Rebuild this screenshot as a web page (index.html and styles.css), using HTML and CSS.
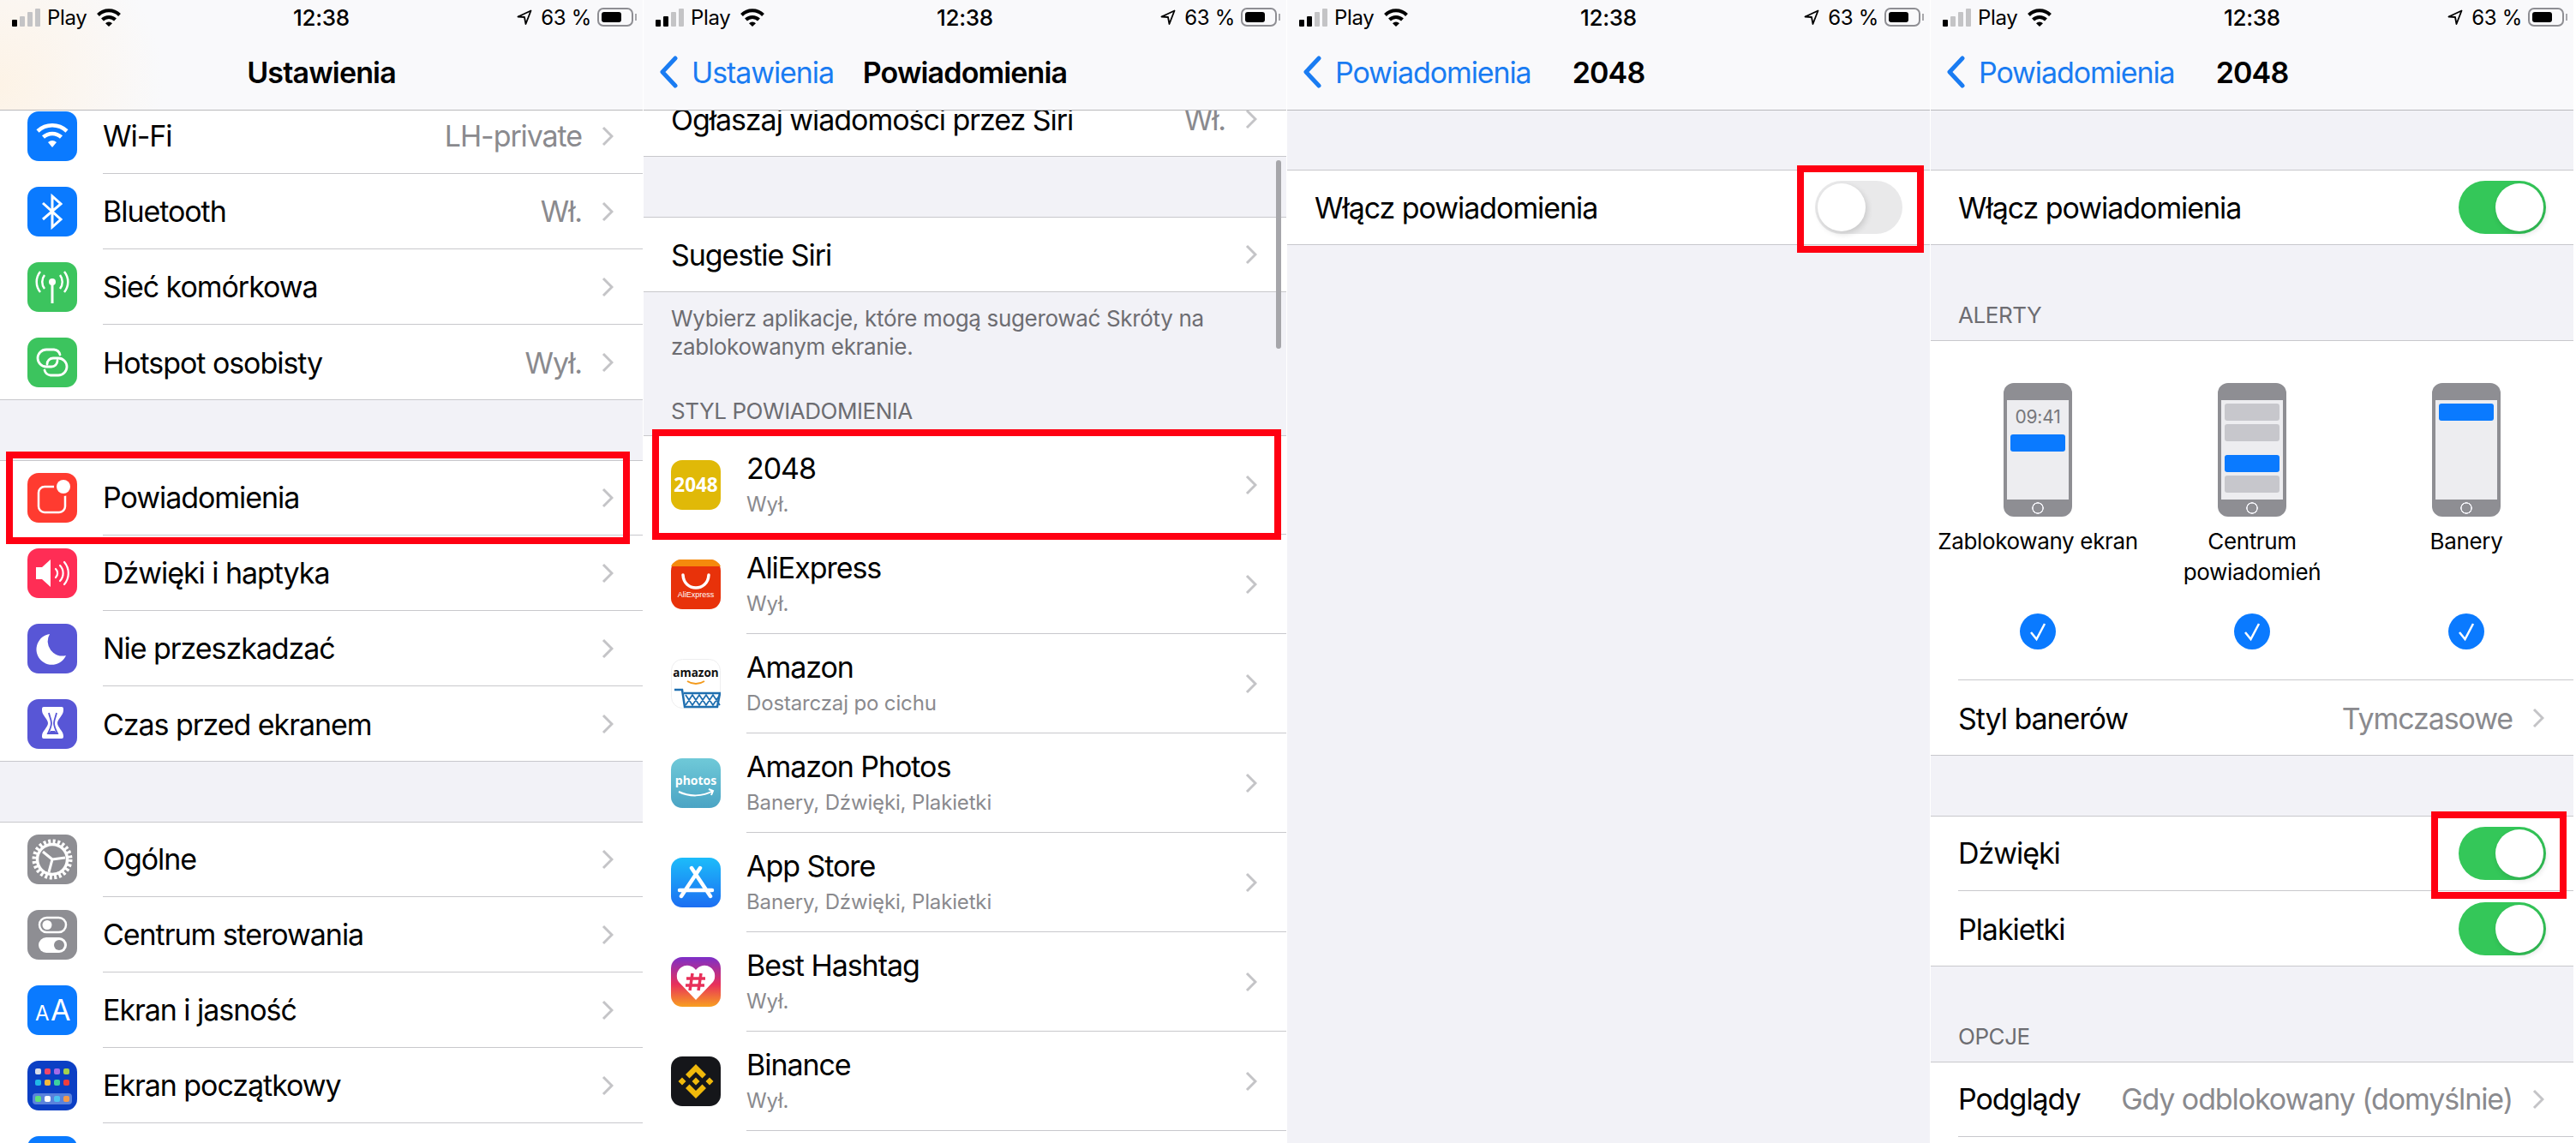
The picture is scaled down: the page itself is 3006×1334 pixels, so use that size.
FILE: index.html
```html
<!DOCTYPE html>
<html lang="pl">
<head>
  <meta charset="UTF-8">
  <meta name="viewport" content="width=device-width, initial-scale=1.0">
  <title>Powiadomienia</title>
  <link rel="stylesheet" href="styles.css">
</head>
<body>
  <svg class="sprite">
    <symbol id="chev" viewBox="0 0 14 24"><path d="M2 2l10 10L2 22" fill="none" stroke="#c4c4c7" stroke-width="3"/></symbol>
    <symbol id="back" viewBox="0 0 24 38"><path d="M20 3L5 19l15 16" fill="none" stroke="#1a7cf2" stroke-width="5" stroke-linecap="round" stroke-linejoin="round"/></symbol>
    <symbol id="wifi" viewBox="0 0 30 22"><path d="M2.500 8.500a17.700 17.700 0 0 1 25 0M7.500 14a10.600 10.600 0 0 1 15 0" fill="none" stroke="#000" stroke-width="4"/><path d="M11 18.300a5.600 5.600 0 0 1 8 0L15 22z"/></symbol>
    <symbol id="arrow" viewBox="0 0 18 18"><path d="M16.500 1.500L1.500 8.500l7.500.5 1.500 8z" fill="none" stroke="#000" stroke-width="1.800" stroke-linejoin="round"/></symbol>
    <symbol id="check" viewBox="0 0 42 42"><circle cx="21" cy="21" r="21" fill="#0a7aff"/><path d="M13 22l6.500 8L29 12" fill="none" stroke="#fff" stroke-width="2.500"/></symbol>
  </svg>

  <div class="screens">

    <section class="panel">
      <header class="top top-warm">
        <div class="status">
          <div class="status-left"><span class="signal"><i class="on"></i><i></i><i></i><i></i></span><span>Play</span><svg class="wifi"><use href="#wifi"/></svg></div>
          <div class="time">12:38</div>
          <div class="status-right"><svg class="arrow"><use href="#arrow"/></svg><span>63 %</span><span class="battery"><i></i></span></div>
        </div>
        <div class="nav"><div></div><div class="nav-title">Ustawienia</div><div></div></div>
      </header>
      <div class="scroll scroll-settings">
        <div class="group">
          <div class="row">
            <svg class="icon" viewBox="0 0 58 58"><rect width="58" height="58" rx="13" fill="#0a7aff"/><path d="M12 23a25 25 0 0 1 34 0M18.500 30a15.500 15.500 0 0 1 21 0" fill="none" stroke="#fff" stroke-width="4.500"/><path d="M24 36a8 8 0 0 1 10 0l-5 6z" fill="#fff"/></svg>
            <div class="row-body"><span class="label">Wi-Fi</span><span class="value">LH-private</span><svg class="chev"><use href="#chev"/></svg></div>
          </div>
          <div class="row">
            <svg class="icon" viewBox="0 0 58 58"><rect width="58" height="58" rx="13" fill="#0a7aff"/><path d="M18 19l21 19-10 9V11l10 9-21 18" fill="none" stroke="#fff" stroke-width="3"/></svg>
            <div class="row-body"><span class="label">Bluetooth</span><span class="value">Wł.</span><svg class="chev"><use href="#chev"/></svg></div>
          </div>
          <div class="row">
            <svg class="icon" viewBox="0 0 58 58"><rect width="58" height="58" rx="13" fill="#3cc45e"/><circle cx="29" cy="23" r="4" fill="#fff"/><path d="M29 26v22" stroke="#fff" stroke-width="3"/><path d="M20 15a13 13 0 0 0 0 16M38 15a13 13 0 0 1 0 16M15 11a19 19 0 0 0 0 24M43 11a19 19 0 0 1 0 24" fill="none" stroke="#fff" stroke-width="2.500"/></svg>
            <div class="row-body"><span class="label">Sieć komórkowa</span><svg class="chev"><use href="#chev"/></svg></div>
          </div>
          <div class="row">
            <svg class="icon" viewBox="0 0 58 58"><rect width="58" height="58" rx="13" fill="#3cc45e"/><path d="M38 20a8 8 0 0 0-7-6h-9a10 10 0 0 0 0 20h6a7 7 0 0 0 7-7M20 38a8 8 0 0 0 7 6h9a10 10 0 0 0 0-20h-6a7 7 0 0 0-7 7" fill="none" stroke="#fff" stroke-width="2.800" stroke-linecap="round"/></svg>
            <div class="row-body"><span class="label">Hotspot osobisty</span><span class="value">Wył.</span><svg class="chev"><use href="#chev"/></svg></div>
          </div>
        </div>

        <div class="group">
          <div class="row">
            <svg class="icon" viewBox="0 0 58 58"><rect width="58" height="58" rx="13" fill="#ff3b30"/><rect x="13" y="16" width="31" height="30" rx="7" fill="none" stroke="#fff" stroke-width="2.500"/><circle cx="42" cy="16" r="11" fill="#ff3b30"/><circle cx="42" cy="16" r="8" fill="#fff"/></svg>
            <div class="row-body"><span class="label">Powiadomienia</span><svg class="chev"><use href="#chev"/></svg></div>
          </div>
          <div class="row">
            <svg class="icon" viewBox="0 0 58 58"><rect width="58" height="58" rx="13" fill="#ff2d55"/><path d="M10 22h7l10-9v32l-10-9h-7z" fill="#fff"/><path d="M33 24a7 7 0 0 1 0 10M38 20a13 13 0 0 1 0 18M43 16a20 20 0 0 1 0 26" fill="none" stroke="#fff" stroke-width="2.200" stroke-linecap="round"/></svg>
            <div class="row-body"><span class="label">Dźwięki i haptyka</span><svg class="chev"><use href="#chev"/></svg></div>
          </div>
          <div class="row">
            <svg class="icon" viewBox="0 0 58 58"><rect width="58" height="58" rx="13" fill="#5856d6"/><path d="M26 12a18 18 0 1 0 19 25 17 17 0 0 1-19-25z" fill="#fff"/></svg>
            <div class="row-body"><span class="label">Nie przeszkadzać</span><svg class="chev"><use href="#chev"/></svg></div>
          </div>
          <div class="row">
            <svg class="icon" viewBox="0 0 58 58"><rect width="58" height="58" rx="13" fill="#5856d6"/><path d="M19 9h21a2 2 0 0 1 2 2v2c0 6-7 10-7 15s7 9 7 15v1a2 2 0 0 1-2 2H19a2 2 0 0 1-2-2v-1c0-6 7-10 7-15s-7-9-7-15v-2a2 2 0 0 1 2-2z" fill="#fff"/><path d="M25 16c1 5 3 8 3 12s-2 8-4 12h11c-2-4-4-8-4-12s2-7 3-12" fill="none" stroke="#5856d6" stroke-width="1.800"/><path d="M24 41h11l-3-4h-5z" fill="#5856d6"/></svg>
            <div class="row-body"><span class="label">Czas przed ekranem</span><svg class="chev"><use href="#chev"/></svg></div>
          </div>
        </div>

        <div class="group">
          <div class="row">
            <svg class="icon" viewBox="0 0 58 58"><rect width="58" height="58" rx="13" fill="#8e8e93"/><circle cx="29" cy="29" r="21" fill="none" stroke="#fff" stroke-width="5" stroke-dasharray="3 2.500"/><circle cx="29" cy="29" r="17.500" fill="none" stroke="#fff" stroke-width="3.500"/><path d="M29 29L18 20M29 29L44 27M29 29L25 44" stroke="#fff" stroke-width="3"/></svg>
            <div class="row-body"><span class="label">Ogólne</span><svg class="chev"><use href="#chev"/></svg></div>
          </div>
          <div class="row">
            <svg class="icon" viewBox="0 0 58 58"><rect width="58" height="58" rx="13" fill="#8e8e93"/><rect x="14" y="9" width="31" height="17" rx="8.500" fill="none" stroke="#fff" stroke-width="2.500"/><circle cx="23" cy="17.500" r="5.500" fill="#fff"/><rect x="13" y="32" width="33" height="18" rx="9" fill="#fff"/><circle cx="37" cy="41" r="6" fill="#8e8e93"/></svg>
            <div class="row-body"><span class="label">Centrum sterowania</span><svg class="chev"><use href="#chev"/></svg></div>
          </div>
          <div class="row">
            <svg class="icon" viewBox="0 0 58 58"><rect width="58" height="58" rx="13" fill="#0a7aff"/><text x="9" y="41" class="glyph-a-small">A</text><text x="27" y="41" class="glyph-a">A</text></svg>
            <div class="row-body"><span class="label">Ekran i jasność</span><svg class="chev"><use href="#chev"/></svg></div>
          </div>
          <div class="row">
            <svg class="icon" viewBox="0 0 58 58"><rect width="58" height="58" rx="13" fill="#0b3fc4"/><rect x="9" y="9" width="7" height="7" rx="2" fill="#d9dce8"/><rect x="20" y="9" width="7" height="7" rx="2" fill="#f0476a"/><rect x="31" y="9" width="7" height="7" rx="2" fill="#a56be8"/><rect x="42" y="9" width="7" height="7" rx="2" fill="#a3d04e"/><rect x="9" y="22" width="7" height="7" rx="2" fill="#22b8e8"/><rect x="20" y="22" width="7" height="7" rx="2" fill="#f5b83d"/><rect x="31" y="22" width="7" height="7" rx="2" fill="#3dd0a0"/><rect x="42" y="22" width="7" height="7" rx="2" fill="#ef3d3d"/><rect x="6" y="38" width="46" height="13" rx="4" fill="#5a82dc"/><rect x="9" y="41" width="7" height="7" rx="2" fill="#5fe07a"/><rect x="20" y="41" width="7" height="7" rx="2" fill="#fff"/><rect x="31" y="41" width="7" height="7" rx="2" fill="#4cc2f0"/><rect x="42" y="41" width="7" height="7" rx="2" fill="#f59a4a"/></svg>
            <div class="row-body"><span class="label">Ekran początkowy</span><svg class="chev"><use href="#chev"/></svg></div>
          </div>
          <div class="row">
            <svg class="icon" viewBox="0 0 58 58"><rect width="58" height="58" rx="13" fill="#0a7aff"/></svg>
            <div class="row-body"></div>
          </div>
        </div>
      </div>
      <div class="mark mark-settings"></div>
    </section>

    <section class="panel">
      <header class="top">
        <div class="status">
          <div class="status-left"><span class="signal"><i class="on"></i><i class="on"></i><i></i><i></i></span><span>Play</span><svg class="wifi"><use href="#wifi"/></svg></div>
          <div class="time">12:38</div>
          <div class="status-right"><svg class="arrow"><use href="#arrow"/></svg><span>63 %</span><span class="battery"><i></i></span></div>
        </div>
        <div class="nav">
          <div class="nav-back"><svg class="back"><use href="#back"/></svg><span>Ustawienia</span></div>
          <div class="nav-title">Powiadomienia</div>
          <div></div>
        </div>
      </header>
      <div class="scroll scroll-apps">
        <div class="group">
          <div class="row"><div class="row-body"><span class="label">Ogłaszaj wiadomości przez Siri</span><span class="value">Wł.</span><svg class="chev"><use href="#chev"/></svg></div></div>
        </div>
        <div class="group">
          <div class="row"><div class="row-body"><span class="label">Sugestie Siri</span><svg class="chev"><use href="#chev"/></svg></div></div>
        </div>
        <p class="note">Wybierz aplikacje, które mogą sugerować Skróty na<br>zablokowanym ekranie.</p>
        <h2 class="section-title">STYL POWIADOMIENIA</h2>
        <div class="group group-apps">
          <div class="row row-app">
            <svg class="icon" viewBox="0 0 58 58"><rect width="58" height="58" rx="13" fill="#e0b908"/><text x="29" y="37" class="logo-2048">2048</text></svg>
            <div class="row-body"><div class="titles"><span class="label">2048</span><span class="sub">Wył.</span></div><svg class="chev"><use href="#chev"/></svg></div>
          </div>
          <div class="row row-app">
            <svg class="icon" viewBox="0 0 58 58"><rect width="58" height="58" rx="13" fill="#e8320a"/><path d="M0 8a13 13 0 0 1 13-8h32a13 13 0 0 1 13 8z" fill="#f58a0c"/><path d="M14 18c1 20 29 20 30 0" fill="none" stroke="#fff" stroke-width="3.500" stroke-linecap="round"/><text x="29" y="44" class="logo-ali">AliExpress</text></svg>
            <div class="row-body"><div class="titles"><span class="label">AliExpress</span><span class="sub">Wył.</span></div><svg class="chev"><use href="#chev"/></svg></div>
          </div>
          <div class="row row-app">
            <svg class="icon" viewBox="0 0 58 58"><rect x=".5" y=".5" width="57" height="57" rx="13" fill="#fff" stroke="#eeeeef"/><text x="29" y="21" class="logo-amazon">amazon</text><path d="M19 26c6 4 14 4 20 0" fill="none" stroke="#f39a1c" stroke-width="1.800"/><path d="M4 36h9l3 20h38l3-16H15" fill="none" stroke="#1f6fb0" stroke-width="2.500"/><path d="M17 42l8 12 8-12 8 12 8-12 8 12M17 54l8-12 8 12 8-12 8 12 8-12" fill="none" stroke="#1f6fb0" stroke-width="1.800"/></svg>
            <div class="row-body"><div class="titles"><span class="label">Amazon</span><span class="sub">Dostarczaj po cichu</span></div><svg class="chev"><use href="#chev"/></svg></div>
          </div>
          <div class="row row-app">
            <svg class="icon" viewBox="0 0 58 58"><defs><linearGradient id="gPhotos" x1="0" y1="0" x2="0" y2="1"><stop offset="0" stop-color="#6fc9d8"/><stop offset="1" stop-color="#4ba4c4"/></linearGradient></defs><rect width="58" height="58" rx="13" fill="url(#gPhotos)"/><text x="29" y="31" class="logo-photos">photos</text><path d="M9 39c12 6 28 6 40-1M44 36l5 2-2 5" fill="none" stroke="#fff" stroke-width="2"/></svg>
            <div class="row-body"><div class="titles"><span class="label">Amazon Photos</span><span class="sub">Banery, Dźwięki, Plakietki</span></div><svg class="chev"><use href="#chev"/></svg></div>
          </div>
          <div class="row row-app">
            <svg class="icon" viewBox="0 0 58 58"><defs><linearGradient id="gStore" x1="0" y1="0" x2="0" y2="1"><stop offset="0" stop-color="#1cbcfa"/><stop offset="1" stop-color="#1c6ef2"/></linearGradient></defs><rect width="58" height="58" rx="13" fill="url(#gStore)"/><path d="M24 12l22 33M34 12L12 45M10 38h38" fill="none" stroke="#fff" stroke-width="4.500" stroke-linecap="round"/></svg>
            <div class="row-body"><div class="titles"><span class="label">App Store</span><span class="sub">Banery, Dźwięki, Plakietki</span></div><svg class="chev"><use href="#chev"/></svg></div>
          </div>
          <div class="row row-app">
            <svg class="icon" viewBox="0 0 58 58"><defs><linearGradient id="gHash" x1="0" y1="0" x2="0" y2="1"><stop offset="0" stop-color="#7d2fc8"/><stop offset=".55" stop-color="#e8305a"/><stop offset="1" stop-color="#f8a020"/></linearGradient></defs><rect width="58" height="58" rx="13" fill="url(#gHash)"/><path d="M29 50L9 29a12 12 0 0 1 20-14 12 12 0 0 1 20 14z" fill="#fff"/><path d="M25 19l-3 20M35 19l-3 20M18 25h22M17 33h22" stroke="#e8305a" stroke-width="3.500"/></svg>
            <div class="row-body"><div class="titles"><span class="label">Best Hashtag</span><span class="sub">Wył.</span></div><svg class="chev"><use href="#chev"/></svg></div>
          </div>
          <div class="row row-app">
            <svg class="icon" viewBox="0 0 58 58"><rect width="58" height="58" rx="13" fill="#15161a"/><path d="M29 9l12 12-4.500 4.500L29 18l-7.500 7.500L17 21zM29 49L17 37l4.500-4.500L29 40l7.500-7.500L41 37zM13 24.500l4.500 4.500L13 33.500 8.500 29zM45 24.500l4.500 4.500-4.500 4.500-4.500-4.500zM29 24.500l4.500 4.500-4.500 4.500-4.500-4.500z" fill="#f0b90b"/></svg>
            <div class="row-body"><div class="titles"><span class="label">Binance</span><span class="sub">Wył.</span></div><svg class="chev"><use href="#chev"/></svg></div>
          </div>
          <div class="row row-app"><div class="row-body"></div></div>
        </div>
      </div>
      <div class="scroller"></div>
      <div class="mark mark-app"></div>
    </section>

    <section class="panel">
      <header class="top">
        <div class="status">
          <div class="status-left"><span class="signal"><i class="on"></i><i class="on"></i><i></i><i></i></span><span>Play</span><svg class="wifi"><use href="#wifi"/></svg></div>
          <div class="time">12:38</div>
          <div class="status-right"><svg class="arrow"><use href="#arrow"/></svg><span>63 %</span><span class="battery"><i></i></span></div>
        </div>
        <div class="nav">
          <div class="nav-back"><svg class="back"><use href="#back"/></svg><span>Powiadomienia</span></div>
          <div class="nav-title">2048</div>
          <div></div>
        </div>
      </header>
      <div class="scroll scroll-detail">
        <div class="group">
          <div class="row"><div class="row-body"><span class="label">Włącz powiadomienia</span><span class="switch"></span></div></div>
        </div>
      </div>
      <div class="mark mark-off"></div>
    </section>

    <section class="panel">
      <header class="top">
        <div class="status">
          <div class="status-left"><span class="signal"><i class="on"></i><i></i><i></i><i></i></span><span>Play</span><svg class="wifi"><use href="#wifi"/></svg></div>
          <div class="time">12:38</div>
          <div class="status-right"><svg class="arrow"><use href="#arrow"/></svg><span>63 %</span><span class="battery"><i></i></span></div>
        </div>
        <div class="nav">
          <div class="nav-back"><svg class="back"><use href="#back"/></svg><span>Powiadomienia</span></div>
          <div class="nav-title">2048</div>
          <div></div>
        </div>
      </header>
      <div class="scroll scroll-detail">
        <div class="group">
          <div class="row"><div class="row-body"><span class="label">Włącz powiadomienia</span><span class="switch switch-on"></span></div></div>
        </div>

        <h2 class="section-title section-title-wide">ALERTY</h2>
        <div class="group">
          <div class="alerts">
            <div class="alert">
              <div class="phone"><div class="phone-screen"><span class="phone-time">09:41</span><i class="msg msg-blue"></i></div></div>
              <div class="alert-name">Zablokowany ekran</div>
              <svg class="tick"><use href="#check"/></svg>
            </div>
            <div class="alert">
              <div class="phone"><div class="phone-screen"><i class="msg"></i><i class="msg"></i><i class="msg msg-blue msg-apart"></i><i class="msg"></i></div></div>
              <div class="alert-name">Centrum<br>powiadomień</div>
              <svg class="tick"><use href="#check"/></svg>
            </div>
            <div class="alert">
              <div class="phone"><div class="phone-screen"><i class="msg msg-blue"></i></div></div>
              <div class="alert-name">Banery</div>
              <svg class="tick"><use href="#check"/></svg>
            </div>
          </div>
          <div class="row"><div class="row-body"><span class="label">Styl banerów</span><span class="value">Tymczasowe</span><svg class="chev"><use href="#chev"/></svg></div></div>
        </div>

        <div class="group">
          <div class="row"><div class="row-body"><span class="label">Dźwięki</span><span class="switch switch-on"></span></div></div>
          <div class="row"><div class="row-body"><span class="label">Plakietki</span><span class="switch switch-on"></span></div></div>
        </div>

        <h2 class="section-title section-title-wide">OPCJE</h2>
        <div class="group">
          <div class="row"><div class="row-body"><span class="label">Podglądy</span><span class="value">Gdy odblokowany (domyślnie)</span><svg class="chev"><use href="#chev"/></svg></div></div>
          <div class="row"><div class="row-body"></div></div>
        </div>
      </div>
      <div class="mark mark-sound"></div>
    </section>

  </div>
</body>
</html>
```

FILE: styles.css
```css
html, body {
  margin: 0;
  padding: 0;
  background: #fff;
}
body {
  font-family: "Inter", "Liberation Sans", sans-serif;
  color: #000;
}
.sprite {
  display: none;
}

.screens {
  display: grid;
  grid-template-columns: repeat(4, 750px);
  column-gap: 1px;
  height: 1334px;
  overflow: hidden;
}
.panel {
  position: relative;
  height: 1334px;
  overflow: hidden;
  background: #f2f2f7;
}

/* status bar + nav */
.top {
  position: relative;
  z-index: 2;
  height: 129px;
  box-sizing: border-box;
  background: #f9f9fb;
  border-bottom: 1px solid #b9b9bc;
}
.top-warm {
  background: radial-gradient(circle at 0 100px, #fdf3e6, rgba(249, 249, 251, 0) 190px), #f9f9fb;
}
.status {
  display: grid;
  grid-template-columns: 1fr auto 1fr;
  align-items: center;
  height: 40px;
  font-size: 24px;
  letter-spacing: -.3px;
}
.status-left {
  display: flex;
  align-items: center;
  padding-left: 14px;
}
.status-right {
  display: flex;
  align-items: center;
  justify-content: flex-end;
  padding-right: 11px;
}
.signal {
  display: flex;
  align-items: flex-end;
  gap: 3px;
  height: 21px;
  margin-right: 8px;
}
.signal i {
  display: block;
  width: 6px;
  border-radius: 1px;
  background: #c4c4c6;
}
.signal i:nth-child(1) { height: 8px; }
.signal i:nth-child(2) { height: 12px; }
.signal i:nth-child(3) { height: 17px; }
.signal i:nth-child(4) { height: 21px; }
.signal i.on {
  background: #000;
}
.wifi {
  width: 30px;
  height: 22px;
  margin-left: 10px;
}
.time {
  font-size: 26px;
  font-weight: 500;
}
.arrow {
  width: 18px;
  height: 18px;
  margin-right: 10px;
}
.battery {
  position: relative;
  display: block;
  width: 42px;
  height: 22px;
  box-sizing: border-box;
  margin-left: 7px;
  padding: 3px;
  border: 2px solid #8e8e93;
  border-radius: 7px;
}
.battery:after {
  content: '';
  position: absolute;
  right: -6px;
  top: 5px;
  width: 2px;
  height: 8px;
  background: #a8a8ac;
}
.battery i {
  display: block;
  width: 23px;
  height: 100%;
  border-radius: 3px;
  background: #000;
}
.nav {
  display: grid;
  grid-template-columns: 1fr auto 1fr;
  align-items: center;
  height: 88px;
  font-size: 34px;
  letter-spacing: -1.1px;
}
.nav-title {
  font-weight: 600;
  letter-spacing: -.85px;
}
.nav-back {
  display: flex;
  align-items: center;
  padding-left: 17px;
  color: #1a7cf2;
}
.back {
  width: 24px;
  height: 38px;
  margin-right: 15px;
}

/* lists */
.scroll-settings { margin-top: -14px; }
.scroll-apps { margin-top: -34px; }
.scroll-detail { margin-top: 69px; }

.group {
  background: #fff;
  box-shadow: inset 0 1px #c8c8cc, inset 0 -1px #c8c8cc;
}
.group + .group {
  margin-top: 70px;
}
.row {
  display: flex;
  align-items: center;
  height: 88px;
  padding-left: 32px;
}
.row-app {
  height: 116px;
}
.row-body {
  display: flex;
  flex: 1;
  align-items: center;
  min-width: 0;
  height: 100%;
  box-sizing: border-box;
  padding-right: 34px;
  border-bottom: 1px solid #c8c8cc;
}
.row:last-child .row-body {
  border-bottom: 0;
}
.icon {
  flex: none;
  width: 58px;
  height: 58px;
  margin-right: 30px;
}
.label {
  flex: 1;
  font-size: 34px;
  letter-spacing: -1.05px;
  white-space: nowrap;
}
.value {
  margin-right: 23px;
  font-size: 34px;
  letter-spacing: -1.1px;
  color: #8a8a8e;
  white-space: nowrap;
}
.chev {
  flex: none;
  width: 14px;
  height: 24px;
}
.titles {
  display: flex;
  flex: 1;
  flex-direction: column;
  gap: 6px;
}
.titles .label {
  flex: none;
  line-height: 40px;
}
.sub {
  font-size: 24px;
  line-height: 32px;
  letter-spacing: -.15px;
  color: #8a8a8e;
}
.note {
  margin: 0;
  padding: 14px 32px 0;
  font-size: 26px;
  line-height: 33px;
  letter-spacing: -.33px;
  color: #6d6d72;
}
.section-title {
  margin: 43px 0 0;
  padding: 0 32px 12px;
  font-size: 26px;
  font-weight: 400;
  line-height: 32px;
  letter-spacing: -.45px;
  color: #6d6d72;
}
.section-title-wide {
  margin-top: 66px;
  padding-bottom: 13px;
}

/* switches */
.switch {
  position: relative;
  display: block;
  flex: none;
  width: 102px;
  height: 62px;
  margin-right: -2px;
  border-radius: 31px;
  background: #e9e9ea;
}
.switch:after {
  content: '';
  position: absolute;
  left: 3px;
  top: 3px;
  width: 56px;
  height: 56px;
  border-radius: 50%;
  background: #fff;
  box-shadow: 2px 3px 7px rgba(0, 0, 0, .14);
}
.switch-on {
  background: #34c759;
}
.switch-on:after {
  left: 43px;
}

/* alert styles */
.alerts {
  display: grid;
  grid-template-columns: repeat(3, 250px);
  height: 397px;
  box-sizing: border-box;
  padding-top: 50px;
  background: linear-gradient(#c8c8cc, #c8c8cc) no-repeat 32px 100% / 718px 1px;
}
.alert {
  display: flex;
  flex-direction: column;
  align-items: center;
}
.phone {
  width: 80px;
  height: 156px;
  box-sizing: border-box;
  padding: 20px 4px;
  border-radius: 12px;
  background: #8e8e93;
  background-image: radial-gradient(circle at 40px 146px, rgba(0, 0, 0, 0) 5.2px, #f2f2f7 5.600px, #f2f2f7 6.500px, rgba(0, 0, 0, 0) 7px);
}
.phone-screen {
  display: flex;
  flex-direction: column;
  align-items: center;
  gap: 4px;
  height: 116px;
  box-sizing: border-box;
  padding: 4px 4px 0;
  background: #ededf0;
}
.phone-time {
  height: 32px;
  font-size: 21px;
  line-height: 32px;
  letter-spacing: -.2px;
  color: #77777b;
}
.msg {
  display: block;
  flex: none;
  width: 64px;
  height: 20px;
  border-radius: 3px;
  background: #c7c7cc;
}
.msg-blue {
  background: #0a7aff;
}
.msg-apart {
  margin-top: 12px;
}
.alert-name {
  height: 72px;
  margin-top: 11px;
  font-size: 26px;
  line-height: 36px;
  letter-spacing: -.35px;
  text-align: center;
  white-space: nowrap;
}
.tick {
  width: 42px;
  height: 42px;
  margin-top: 30px;
}

/* svg logo text */
.logo-2048 {
  font: 700 22.500px "Open Sans", sans-serif;
  fill: #fff;
  text-anchor: middle;
}
.logo-ali {
  font: 400 9px "Liberation Sans", sans-serif;
  fill: #fff;
  text-anchor: middle;
}
.logo-amazon {
  font: 700 13.500px "Open Sans", sans-serif;
  fill: #111;
  text-anchor: middle;
}
.logo-photos {
  font: 700 14px "Open Sans", sans-serif;
  fill: #fff;
  text-anchor: middle;
}
.glyph-a-small {
  font: 400 24px "Inter", sans-serif;
  fill: #fff;
}
.glyph-a {
  font: 400 34px "Inter", sans-serif;
  fill: #fff;
}

/* red marks and scrollbar lie over the lists */
.mark {
  position: absolute;
  z-index: 3;
  box-sizing: border-box;
  border: 8px solid #ff0012;
}
.mark-settings {
  left: 7px;
  top: 527px;
  width: 728px;
  height: 108px;
}
.mark-app {
  left: 10px;
  top: 501px;
  width: 734px;
  height: 129px;
}
.mark-off {
  left: 595px;
  top: 193px;
  width: 148px;
  height: 102px;
}
.mark-sound {
  left: 584px;
  top: 947px;
  width: 158px;
  height: 102px;
}
.scroller {
  position: absolute;
  left: 738px;
  top: 187px;
  width: 6px;
  height: 220px;
  border-radius: 3px;
  background: #a6a6aa;
}
```
